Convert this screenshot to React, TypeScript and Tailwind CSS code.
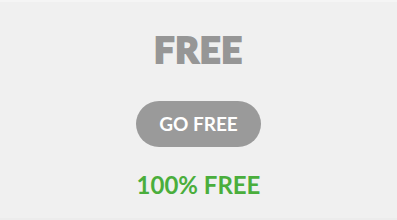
export default function App() {
  return (
    <div className="w-[397px] h-[220px] bg-[#f0f0f0] flex flex-col items-center border-t-2 border-t-[#f5f5f5] border-b-2 border-b-[#ececec]" style={{ fontFamily: "Lato, 'Open Sans', sans-serif" }}>
      <div className="mt-[22px] text-[36px] leading-[50px] font-black text-[#969696] tracking-[1px] [-webkit-text-stroke:2px_#969696]">FREE</div>
      <div className="mt-[27px] w-[125px] h-[46px] rounded-full bg-[#9a9a9a] flex items-center justify-center text-white text-[19px] font-bold">GO FREE</div>
      <div className="mt-[22px] text-[24px] leading-[32px] font-bold text-[#4aae3c]">100% FREE</div>
    </div>
  );
}
